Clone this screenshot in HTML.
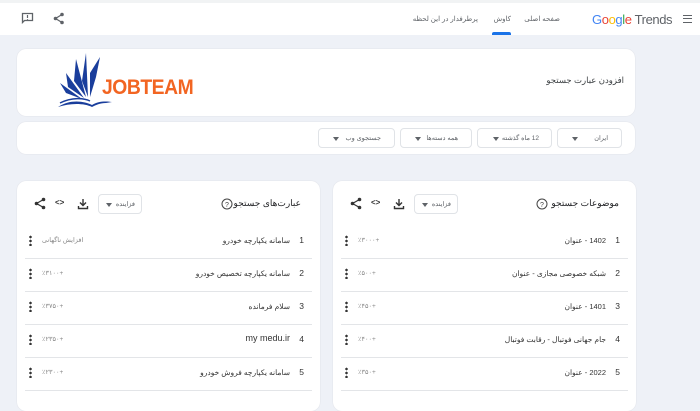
<!DOCTYPE html>
<html><head><meta charset="utf-8"><style>
*{margin:0;padding:0;box-sizing:border-box}
body{width:700px;height:400px;overflow:hidden;background:#eef1f7;font-family:"Liberation Sans","Noto Sans CJK SC",sans-serif;position:relative;color:#202124}
.abs{position:absolute}
.top{left:0;top:0;width:700px;height:3px;background:#f1f3f4}
.hdr{left:0;top:3px;width:700px;height:32px;background:#fff}
.nav{font-size:7px;color:#5f6368;top:15px;white-space:nowrap;direction:rtl}
.card{background:#fff;border-radius:9px;box-shadow:0 0 1px rgba(0,0,0,.15)}
.dd{border:1px solid #e0e3e7;border-radius:4px;background:#fff;font-size:6.5px;color:#5f6368;height:20px}
.dd span{position:absolute;top:5px;direction:rtl;white-space:nowrap}
.tri{position:absolute;width:0;height:0;border-left:3px solid transparent;border-right:3px solid transparent;border-top:4px solid #5f6368;top:8px}
.row{position:absolute;height:33px;border-bottom:1px solid #e3e5e8}
.row .n{position:absolute;right:8px;top:9px;font-size:8.5px;color:#333}
.row .t{position:absolute;right:22px;top:10px;font-size:7.5px;color:#333;white-space:nowrap;direction:rtl}
.row .p{position:absolute;top:10px;font-size:6.5px;color:#888;white-space:nowrap}
.dots{position:absolute;top:9px;width:3px;height:11px;background:radial-gradient(circle,#333 1.2px,transparent 1.4px) 0 0/3px 4px repeat-y}
.ttl{font-size:9px;color:#202124;white-space:nowrap;direction:rtl}
</style></head><body>
<div class="abs top"></div>
<div class="abs hdr"></div>
<svg class="abs" style="left:21px;top:12px" width="13" height="12" viewBox="0 0 13 12"><path d="M1.5 1.5h10v7h-8l-2 2z" fill="none" stroke="#5f6368" stroke-width="1.3"/><path d="M6.5 3v3M6.5 7v.8" stroke="#5f6368" stroke-width="1.2"/></svg>
<svg class="abs" style="left:53px;top:12px" width="12" height="13" viewBox="0 0 12 13"><circle cx="9" cy="2.5" r="1.8" fill="#5f6368"/><circle cx="2.5" cy="6.5" r="1.8" fill="#5f6368"/><circle cx="9" cy="10.5" r="1.8" fill="#5f6368"/><path d="M9 2.5L2.5 6.5 9 10.5" stroke="#5f6368" stroke-width="1.2" fill="none"/></svg>
<div class="abs nav" style="right:222px">پرطرفدار در این لحظه</div>
<div class="abs nav" style="right:189px">کاوش</div>
<div class="abs nav" style="right:140px">صفحه اصلی</div>
<div class="abs" style="left:492px;top:32px;width:19px;height:3px;background:#1a73e8;border-radius:2px 2px 0 0"></div>
<div class="abs" style="left:592px;top:12px;font-size:13px;white-space:nowrap;letter-spacing:-.4px"><span style="color:#4285f4">G</span><span style="color:#ea4335">o</span><span style="color:#fbbc05">o</span><span style="color:#4285f4">g</span><span style="color:#34a853">l</span><span style="color:#ea4335">e</span> <span style="color:#5f6368">Trends</span></div>
<div class="abs" style="left:683px;top:15px;width:9px;height:8px;border-top:1.5px solid #5f6368;border-bottom:1.5px solid #5f6368"><div style="margin-top:1.8px;height:1.5px;background:#5f6368"></div></div>

<div class="abs card" style="left:17px;top:49px;width:618px;height:67px"></div>
<svg class="abs" style="left:56px;top:51px" width="60" height="58" viewBox="0 0 60 58">
<path d="M30 2 L26 30 L32 46 Z" fill="#1a3e9c"/>
<path d="M44 6 L34 22 L34 46 L40 26 Z" fill="#1a3e9c"/>
<path d="M20 8 L18 30 L30 46 Z" fill="#1a3e9c"/>
<path d="M10 22 L12 36 L28 47 Z" fill="#1a3e9c"/>
<path d="M4 32 L10 42 L26 48 Z" fill="#1a3e9c"/>
<path d="M2 56 C14 48 28 50 36 54 C42 50 50 50 56 51 L50 52 C44 52 40 54 36 56 C28 52 14 52 2 56Z" fill="#1a3e9c"/>
<path d="M4 52 C16 46 28 47 34 50" stroke="#1a3e9c" stroke-width="1.5" fill="none"/>
</svg>
<div class="abs" style="left:102px;top:76px;font-size:21px;font-weight:bold;color:#f26522;letter-spacing:-.5px;transform:scaleX(.92);transform-origin:left">JOBTEAM</div>
<div class="abs" style="right:76px;top:75px;font-size:8.5px;color:#3c4043;white-space:nowrap;direction:rtl">افزودن عبارت جستجو</div>

<div class="abs card" style="left:17px;top:122px;width:618px;height:32px"></div>
<div class="abs dd" style="left:557px;top:128px;width:65px"><span style="right:13px">ایران</span><i class="tri" style="left:14px"></i></div>
<div class="abs dd" style="left:477px;top:128px;width:75px"><span style="right:12px">12 ماه گذشته</span><i class="tri" style="left:15px"></i></div>
<div class="abs dd" style="left:400px;top:128px;width:72px"><span style="right:13px">همه دسته‌ها</span><i class="tri" style="left:14px"></i></div>
<div class="abs dd" style="left:318px;top:128px;width:77px"><span style="right:13px">جستجوی وب</span><i class="tri" style="left:14px"></i></div>

<div class="abs card" style="left:17px;top:181px;width:303px;height:230px"></div>
<div class="abs card" style="left:333px;top:181px;width:303px;height:230px"></div>

<div class="abs ttl" style="right:399px;top:198px">عبارت‌های جستجو</div>
<svg class="abs" style="left:221px;top:198px" width="12" height="12" viewBox="0 0 12 12"><circle cx="6" cy="6" r="5" fill="none" stroke="#444" stroke-width="1"/><text x="6" y="9" font-size="7" text-anchor="middle" fill="#444" font-family="Liberation Sans">?</text></svg>
<div class="abs dd" style="left:98px;top:194px;width:44px"><span style="right:6px">فزاینده</span><i class="tri" style="left:7px"></i></div>
<svg class="abs" style="left:77px;top:198px" width="12" height="12" viewBox="0 0 12 12"><path d="M6 1v6M3 4.5L6 7.5 9 4.5M1.5 8v2.5h9V8" stroke="#333" stroke-width="1.4" fill="none"/></svg>
<div class="abs" style="left:55px;top:198px;font-size:8px;font-weight:bold;color:#333">&lt;&gt;</div>
<svg class="abs" style="left:34px;top:197px" width="12" height="13" viewBox="0 0 12 13"><circle cx="9.5" cy="2.5" r="1.8" fill="#333"/><circle cx="2.5" cy="6.5" r="1.8" fill="#333"/><circle cx="9.5" cy="10.5" r="1.8" fill="#333"/><path d="M9.5 2.5L2.5 6.5 9.5 10.5" stroke="#333" stroke-width="1.2" fill="none"/></svg>

<div class="row" style="left:25px;top:226px;width:287px"><i class="dots" style="left:4px"></i><span class="p" style="left:17px">افزایش ناگهانی</span><span class="t">سامانه یکپارچه خودرو</span><span class="n">1</span></div>
<div class="row" style="left:25px;top:259px;width:287px"><i class="dots" style="left:4px"></i><span class="p" style="left:17px">٪۳۱۰۰+</span><span class="t">سامانه یکپارچه تخصیص خودرو</span><span class="n">2</span></div>
<div class="row" style="left:25px;top:292px;width:287px"><i class="dots" style="left:4px"></i><span class="p" style="left:17px">٪۳۷۵۰+</span><span class="t">سلام فرمانده</span><span class="n">3</span></div>
<div class="row" style="left:25px;top:325px;width:287px"><i class="dots" style="left:4px"></i><span class="p" style="left:17px">٪۲۳۵۰+</span><span class="t" style="font-size:9px;top:8px">my medu.ir</span><span class="n">4</span></div>
<div class="row" style="left:25px;top:358px;width:287px"><i class="dots" style="left:4px"></i><span class="p" style="left:17px">٪۲۳۰۰+</span><span class="t">سامانه یکپارچه فروش خودرو</span><span class="n">5</span></div>

<div class="abs ttl" style="right:81px;top:198px">موضوعات جستجو</div>
<svg class="abs" style="left:536px;top:198px" width="12" height="12" viewBox="0 0 12 12"><circle cx="6" cy="6" r="5" fill="none" stroke="#444" stroke-width="1"/><text x="6" y="9" font-size="7" text-anchor="middle" fill="#444" font-family="Liberation Sans">?</text></svg>
<div class="abs dd" style="left:414px;top:194px;width:44px"><span style="right:6px">فزاینده</span><i class="tri" style="left:7px"></i></div>
<svg class="abs" style="left:393px;top:198px" width="12" height="12" viewBox="0 0 12 12"><path d="M6 1v6M3 4.5L6 7.5 9 4.5M1.5 8v2.5h9V8" stroke="#333" stroke-width="1.4" fill="none"/></svg>
<div class="abs" style="left:371px;top:198px;font-size:8px;font-weight:bold;color:#333">&lt;&gt;</div>
<svg class="abs" style="left:350px;top:197px" width="12" height="13" viewBox="0 0 12 13"><circle cx="9.5" cy="2.5" r="1.8" fill="#333"/><circle cx="2.5" cy="6.5" r="1.8" fill="#333"/><circle cx="9.5" cy="10.5" r="1.8" fill="#333"/><path d="M9.5 2.5L2.5 6.5 9.5 10.5" stroke="#333" stroke-width="1.2" fill="none"/></svg>

<div class="row" style="left:341px;top:226px;width:287px"><i class="dots" style="left:4px"></i><span class="p" style="left:17px">٪۳۰۰۰+</span><span class="t">1402 - عنوان</span><span class="n">1</span></div>
<div class="row" style="left:341px;top:259px;width:287px"><i class="dots" style="left:4px"></i><span class="p" style="left:17px">٪۵۰۰+</span><span class="t">شبکه خصوصی مجازی - عنوان</span><span class="n">2</span></div>
<div class="row" style="left:341px;top:292px;width:287px"><i class="dots" style="left:4px"></i><span class="p" style="left:17px">٪۴۵۰+</span><span class="t">1401 - عنوان</span><span class="n">3</span></div>
<div class="row" style="left:341px;top:325px;width:287px"><i class="dots" style="left:4px"></i><span class="p" style="left:17px">٪۴۰۰+</span><span class="t">جام جهانی فوتبال - رقابت فوتبال</span><span class="n">4</span></div>
<div class="row" style="left:341px;top:358px;width:287px"><i class="dots" style="left:4px"></i><span class="p" style="left:17px">٪۳۵۰+</span><span class="t">2022 - عنوان</span><span class="n">5</span></div>
</body></html>
